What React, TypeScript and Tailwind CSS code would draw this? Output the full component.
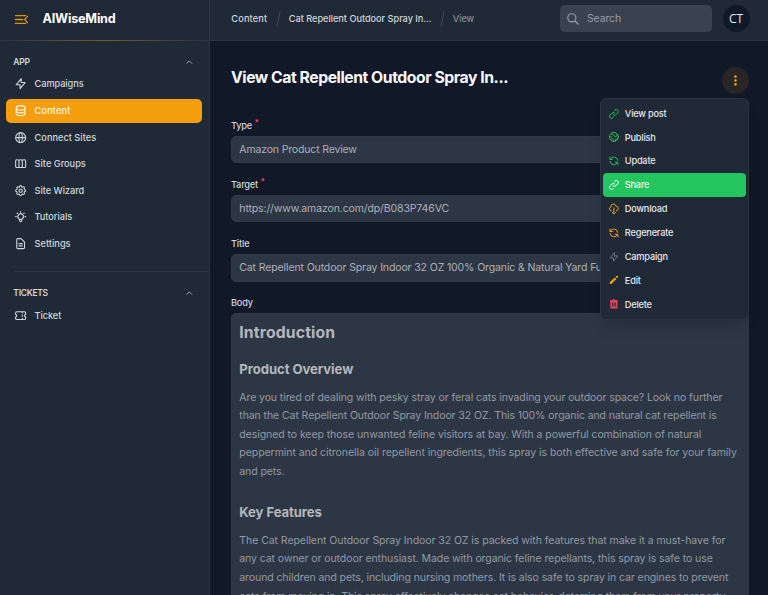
import React from "react";
import {
  HiOutlineLightningBolt, HiOutlineDatabase, HiOutlineGlobeAlt, HiOutlineViewBoards, HiOutlineCog,
  HiOutlineLightBulb, HiOutlineDocumentText, HiOutlineTicket, HiOutlineChevronUp, HiOutlineSearch,
  HiDotsVertical, HiOutlineLink, HiOutlineGlobe, HiOutlineRefresh, HiOutlineCloudDownload, HiPencil, HiTrash,
} from "react-icons/hi";
import type { IconType } from "react-icons";

type NavEntry = { icon: IconType; label: string; text: string; active?: boolean };

const appNav: NavEntry[] = [
  { icon: HiOutlineLightningBolt, label: "Campaigns", text: "tracking-[-0.07px]" },
  { icon: HiOutlineDatabase, label: "Content", text: "tracking-[0.15px]", active: true },
  { icon: HiOutlineGlobeAlt, label: "Connect Sites", text: "tracking-[0.02px]" },
  { icon: HiOutlineViewBoards, label: "Site Groups", text: "tracking-[0.01px]" },
  { icon: HiOutlineCog, label: "Site Wizard", text: "tracking-[-0.05px]" },
  { icon: HiOutlineLightBulb, label: "Tutorials", text: "tracking-[-0.05px]" },
  { icon: HiOutlineDocumentText, label: "Settings", text: "tracking-[0.02px]" },
];

const ticketNav: NavEntry[] = [{ icon: HiOutlineTicket, label: "Ticket", text: "tracking-[-0.07px]" }];

const actions: { icon: IconType; label: string; color: string; active?: boolean }[] = [
  { icon: HiOutlineLink, label: "View post", color: "text-[#22b85a]" },
  { icon: HiOutlineGlobe, label: "Publish", color: "text-[#22b85a]" },
  { icon: HiOutlineRefresh, label: "Update", color: "text-[#22b85a]" },
  { icon: HiOutlineLink, label: "Share", color: "text-white", active: true },
  { icon: HiOutlineCloudDownload, label: "Download", color: "text-[#f59e0b]" },
  { icon: HiOutlineRefresh, label: "Regenerate", color: "text-[#f59e0b]" },
  { icon: HiOutlineLightningBolt, label: "Campaign", color: "text-[#6b7280]" },
  { icon: HiPencil, label: "Edit", color: "text-[#f59e0b]" },
  { icon: HiTrash, label: "Delete", color: "text-[#f43f5e]" },
];

function NavList({ items }: { items: NavEntry[] }) {
  return (
    <ul className="flex flex-col gap-[2.6px] pl-[5.5px] pr-[7.5px]">
      {items.map(({ icon: Icon, label, text, active }) => (
        <li
          key={label}
          className={`flex h-[24px] items-center gap-[7.8px] rounded-[5px] pl-[8px] text-[9.2px] font-medium ${
            active ? "bg-[#f59e0b] text-[#fdf6e8]" : "text-[#d1d5db]"
          }`}
        >
          <Icon className="size-[13.3px] shrink-0" />
          <span className={`pt-[0.6px] ${text}`}>{label}</span>
        </li>
      ))}
    </ul>
  );
}

function GroupTitle({ children, text }: { children: string; text: string }) {
  return (
    <div className="flex h-[16px] items-center justify-between pl-[13.3px] pr-[15.5px] text-[#d1d5db]">
      <span className={`text-[8.5px] font-semibold ${text}`}>{children}</span>
      <HiOutlineChevronUp className="size-[8.5px]" />
    </div>
  );
}

function Label({ children, text, required }: { children: string; text: string; required?: boolean }) {
  return (
    <div className="flex h-[14px] pt-[0.7px] text-[9.2px] leading-[14px] font-medium text-[#d1d5db]">
      <span className={text}>{children}</span>
      {required && <span className="ml-[2.5px] -mt-[2px] text-[8px] leading-[11px] font-bold text-[#f43f5e]">*</span>}
    </div>
  );
}

function Field({ label, labelText, value, valueText, required }: {
  label: string; labelText: string; value: string; valueText: string; required?: boolean;
}) {
  return (
    <div className="flex flex-col gap-[3.7px]">
      <Label text={labelText} required={required}>{label}</Label>
      <div className="flex h-[27.5px] items-center overflow-hidden rounded-[5px] border border-[#303948] bg-[#2d3645] px-[7.3px] text-[10.5px] whitespace-nowrap text-[#adb0b5]">
        <span className={valueText}>{value}</span>
      </div>
    </div>
  );
}

function Slash() {
  return (
    <svg viewBox="0 0 6 18" className="h-[18px] w-[6px] text-[#414b59]" fill="none" stroke="currentColor">
      <path d="M4 1.5 1 16.5" />
    </svg>
  );
}

export default function App() {
  return (
    <div className="flex h-[595px] w-[768px] overflow-hidden bg-[#111827] font-['Inter','DejaVu_Sans',sans-serif]">
      <aside className="flex w-[210px] shrink-0 flex-col border-r border-[#2a3341] bg-[#202a37]">
        <div className="flex h-[40px] shrink-0 items-center pb-[2px] pl-[13px]">
          <svg viewBox="0 0 24 24" className="size-[17px] text-[#e0930f]" fill="none" stroke="currentColor" strokeWidth="1.8" strokeLinecap="round" strokeLinejoin="round">
            <path d="M20.5 7.5 16.5 12l4 4.5M3.5 12H14M3.5 17.5h14.5M3.5 6.5h14.5" />
          </svg>
          <span className="ml-[12.5px] text-[12.6px] font-bold tracking-[-0.19px] text-white">AIWiseMind</span>
        </div>
        <div className="h-px shrink-0 bg-linear-to-r from-[#2a3341] via-[#785a23] to-[#2a3341]" />
        <div className="flex flex-col pt-[13px]">
          <GroupTitle text="tracking-[-0.25px]">APP</GroupTitle>
          <div className="pt-[2px]"><NavList items={appNav} /></div>
        </div>
        <div className="mt-[15.5px] ml-[13.5px] h-px bg-[#2d3745]" />
        <div className="flex flex-col pt-[13px]">
          <GroupTitle text="tracking-[-0.28px]">TICKETS</GroupTitle>
          <div className="pt-[2.5px]"><NavList items={ticketNav} /></div>
        </div>
      </aside>

      <main className="flex w-[558px] flex-col">
        <header className="flex h-[41px] shrink-0 items-center border-b border-[#29323f] bg-[#202a37] pb-[3px] pl-[21.3px] text-[9.2px] font-medium text-[#d1d5db]">
          <span className="w-[44.5px] pt-[1px] tracking-[0.15px]">Content</span>
          <Slash />
          <span className="ml-[7px] w-[151px] pt-[1px] tracking-[-0.026px] whitespace-nowrap">Cat Repellent Outdoor Spray In...</span>
          <Slash />
          <span className="ml-[7px] pt-[1px] tracking-[-0.1px] text-[#858c97]">View</span>
          <div className="ml-auto flex h-[27px] w-[152px] items-center gap-[7px] rounded-[5px] bg-[#394250] pl-[6.5px] font-normal text-[#979ca5]">
            <HiOutlineSearch className="size-[14px]" />
            <span className="text-[10.5px] tracking-[-0.14px]">Search</span>
          </div>
          <div className="mr-[18.5px] ml-[11px] flex size-[27px] items-center justify-center rounded-full bg-[#111827] font-['Open_Sans','Noto_Sans',sans-serif] text-[12px] font-normal text-[#e8e9eb]">CT</div>
        </header>

        <div className="flex min-h-0 grow flex-col overflow-hidden pr-[18.7px] pl-[21px]">
          <div className="relative mt-[25.5px] flex h-[27px] shrink-0 items-center justify-between">
            <h1 className="mb-[4px] text-[15.75px] font-bold tracking-[-0.45px] whitespace-nowrap text-[#f9fafb]">View Cat Repellent Outdoor Spray In...</h1>
            <button className="flex size-[27px] items-center justify-center rounded-full bg-[#282624] text-[#f59e0b]">
              <HiDotsVertical className="size-[13px]" />
            </button>

            <div className="absolute top-[31px] right-0 z-10 flex h-[222px] w-[149.3px] flex-col rounded-[6px] border border-[#2a3442] bg-[#202a37] px-[2px] py-[3px] shadow-lg">
              {actions.map(({ icon: Icon, label, color, active }) => (
                <div key={label} className={`flex h-[23.85px] shrink-0 items-center gap-[5px] rounded-[4px] pl-[5px] text-[9.2px] font-medium tracking-[-0.2px] ${active ? "bg-[#22c55e] text-[#f0fbf4]" : "text-[#e5e7eb]"}`}>
                  <Icon className={`size-[11.8px] shrink-0 ${color}`} />
                  <span className="pt-[0.5px]">{label}</span>
                </div>
              ))}
            </div>
          </div>

          <div className="flex shrink-0 flex-col gap-[14px] pt-[24.6px]">
            <Field label="Type" labelText="tracking-[-0.2px]" required value="Amazon Product Review" valueText="tracking-[-0.154px]" />
            <Field label="Target" labelText="tracking-[-0.2px]" required value="https://www.amazon.com/dp/B083P746VC" valueText="tracking-[-0.116px]" />
            <Field label="Title" labelText="tracking-[-0.14px]" value="Cat Repellent Outdoor Spray Indoor 32 OZ 100% Organic & Natural Yard Furniture Spray" valueText="tracking-[-0.121px]" />
            <div className="flex flex-col gap-[3.7px]">
              <Label text="tracking-[-0.16px]">Body</Label>
              <div className="h-[320px] rounded-[5px] border border-[#303948] bg-[#2d3645] px-[7.3px] text-[10.5px] leading-[18.6px] whitespace-nowrap text-[#9499a1]">
                <h2 className="pt-[6.6px] text-[15.75px] leading-[24px] font-bold tracking-[0.15px] text-[#b5b7bb]">Introduction</h2>
                <h3 className="mt-[13.9px] text-[13.1px] leading-[20px] font-bold tracking-[-0.05px] text-[#b5b7bb]">Product Overview</h3>
                <p className="mt-[9.8px]">
                  <span className="tracking-[-0.087px]">Are you tired of dealing with pesky stray or feral cats invading your outdoor space? Look no further</span><br />
                  <span className="tracking-[-0.081px]">than the Cat Repellent Outdoor Spray Indoor 32 OZ. This 100% organic and natural cat repellent is</span><br />
                  <span className="tracking-[-0.064px]">designed to keep those unwanted feline visitors at bay. With a powerful combination of natural</span><br />
                  <span className="tracking-[-0.048px]">peppermint and citronella oil repellent ingredients, this spray is both effective and safe for your family</span><br />
                  <span className="tracking-[-0.1px]">and pets.</span>
                </p>
                <h3 className="mt-[20.5px] text-[13.1px] leading-[20px] font-bold tracking-[-0.076px] text-[#b5b7bb]">Key Features</h3>
                <p className="mt-[9.8px]">
                  <span className="tracking-[-0.058px]">The Cat Repellent Outdoor Spray Indoor 32 OZ is packed with features that make it a must-have for</span><br />
                  <span className="tracking-[-0.079px]">any cat owner or outdoor enthusiast. Made with organic feline repellants, this spray is safe to use</span><br />
                  <span className="tracking-[-0.087px]">around children and pets, including nursing mothers. It is also safe to spray in car engines to prevent</span><br />
                  <span className="tracking-[-0.097px]">cats from moving in. This spray effectively changes cat behavior, deterring them from your property,</span>
                </p>
              </div>
            </div>
          </div>
        </div>
      </main>
    </div>
  );
}
